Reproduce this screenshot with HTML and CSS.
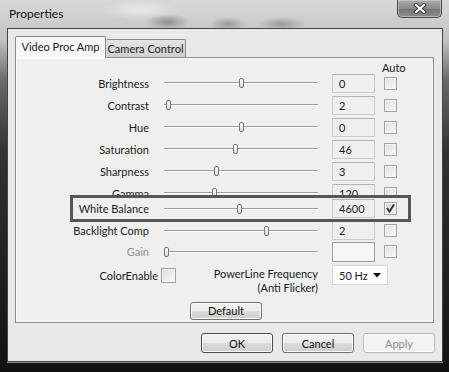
FILE: index.html
```html
<!DOCTYPE html>
<html lang="en">
<head>
<meta charset="UTF-8">
<title>Properties</title>
<link rel="stylesheet" href="styles.css">
</head>
<body>

<div class="window">
  <div class="titlebar">
    <span class="title">Properties</span>
    <div class="close">
      <svg width="14" height="11" viewBox="0 0 14 11">
        <path d="M3 2 L11 9 M11 2 L3 9" stroke="#3a3a3a" stroke-width="4" stroke-linecap="square"/>
        <path d="M3 2 L11 9 M11 2 L3 9" stroke="#fff" stroke-width="2" stroke-linecap="square"/>
      </svg>
    </div>
  </div>

  <div class="client">
    <div class="tabs">
      <div class="tab active">Video Proc Amp</div>
      <div class="tab">Camera Control</div>
    </div>

    <div class="panel">
      <div class="auto-head">Auto</div>

      <div class="row">
        <label>Brightness</label>
        <div class="slider"><span class="thumb" style="left:75px"></span></div>
        <div class="value">0</div>
        <span class="check"></span>
      </div>
      <div class="row">
        <label>Contrast</label>
        <div class="slider"><span class="thumb" style="left:2px"></span></div>
        <div class="value">2</div>
        <span class="check"></span>
      </div>
      <div class="row">
        <label>Hue</label>
        <div class="slider"><span class="thumb" style="left:75px"></span></div>
        <div class="value">0</div>
        <span class="check"></span>
      </div>
      <div class="row">
        <label>Saturation</label>
        <div class="slider"><span class="thumb" style="left:69px"></span></div>
        <div class="value">46</div>
        <span class="check"></span>
      </div>
      <div class="row">
        <label>Sharpness</label>
        <div class="slider"><span class="thumb" style="left:50px"></span></div>
        <div class="value">3</div>
        <span class="check"></span>
      </div>
      <div class="row">
        <label>Gamma</label>
        <div class="slider"><span class="thumb" style="left:48px"></span></div>
        <div class="value">120</div>
        <span class="check"></span>
      </div>
      <div class="row row-wb">
        <label>White Balance</label>
        <div class="slider"><span class="thumb" style="left:73px"></span></div>
        <div class="value">4600</div>
        <span class="check checked">
          <svg width="11" height="11" viewBox="0 0 11 11"><path d="M2 5 L4.5 8.5 L9 1.5" fill="none" stroke="#333" stroke-width="2"/></svg>
        </span>
      </div>
      <div class="row row-low">
        <label>Backlight Comp</label>
        <div class="slider"><span class="thumb" style="left:100px"></span></div>
        <div class="value">2</div>
        <span class="check"></span>
      </div>
      <div class="row row-low disabled">
        <label>Gain</label>
        <div class="slider"><span class="thumb" style="left:0px"></span></div>
        <div class="value"></div>
        <span class="check"></span>
      </div>

      <div class="extra">
        <div class="color-enable">ColorEnable <span class="check big"></span></div>
        <div class="powerline">PowerLine Frequency<br>(Anti Flicker)</div>
        <div class="select">
          <span>50 Hz</span>
          <svg width="8" height="5" viewBox="0 0 8 5"><path d="M0 0 H8 L4 4.5 Z" fill="#111"/></svg>
        </div>
      </div>

      <div class="default-row">
        <button class="btn small">Default</button>
      </div>
    </div>

    <div class="buttons">
      <button class="btn ok">OK</button>
      <button class="btn">Cancel</button>
      <button class="btn" disabled>Apply</button>
    </div>
  </div>
</div>

</body>
</html>
```

FILE: styles.css
```css
body {
  margin: 0;
  font-family: Lato, "Noto Sans", sans-serif;
  font-size: 11px;
  color: #1b1b1b;
}
.window {
  width: 449px;
  height: 372px;
  display: flex;
  flex-direction: column;
  background: linear-gradient(to bottom, #d2d2d2 0, #c2c2c2 40px, #6a6a6a 80px, #333 150px, #1c1c1c 300px, #111 372px);
}
.titlebar {
  height: 28px;
  flex: none;
  display: flex;
  justify-content: space-between;
  background:
    radial-gradient(ellipse 22px 8px at 168px 22px, rgba(70,70,70,.45), transparent),
    radial-gradient(ellipse 18px 7px at 228px 24px, rgba(80,80,80,.4), transparent),
    radial-gradient(ellipse 24px 7px at 282px 24px, rgba(80,80,80,.4), transparent),
    radial-gradient(ellipse 40px 10px at 140px 10px, rgba(255,255,255,.5), transparent),
    linear-gradient(to bottom, #d8d8d8, #c9c9c9);
}
.title {
  padding-left: 9px;
  line-height: 28px;
  font-size: 12px;
  color: #111;
}
.close {
  width: 45px;
  height: 18px;
  margin-right: 7px;
  box-sizing: border-box;
  border: 1px solid #4a4a4a;
  border-top: none;
  border-radius: 0 0 5px 5px;
  background: linear-gradient(to bottom, #a8a8a8, #8a8a8a 50%, #747474 51%, #8c8c8c);
  box-shadow: inset 0 0 0 1px rgba(255,255,255,.35);
  display: flex;
  justify-content: center;
  align-items: center;
}
.client {
  flex: 1;
  margin: 0 6px 10px 7px;
  padding: 7px 7px 0 7px;
  border: 1px solid #444;
  background: #e9e9e9;
  box-shadow: 0 1px 0 rgba(255,255,255,.5);
}

/* tabs */
.tabs {
  display: flex;
  align-items: flex-start;
  height: 22px;
  margin-bottom: -1px;
  position: relative;
  z-index: 1;
}
.tab {
  box-sizing: border-box;
  border: 1px solid #8a8a8a;
  border-bottom: none;
  border-radius: 2px 2px 0 0;
  text-align: center;
  white-space: nowrap;
}
.tab.active {
  width: 91px;
  height: 22px;
  line-height: 19px;
  background: #f7f7f7;
}
.tab:not(.active) {
  width: 80px;
  height: 18px;
  margin-top: 3px;
  border-left: none;
  line-height: 18px;
  background: linear-gradient(to bottom, #e4e4e4, #cfcfcf);
}
.panel {
  width: 419px;
  height: 266px;
  box-sizing: border-box;
  border: 1px solid #8d8d8d;
  background: #efefef;
  box-shadow: inset 0 0 0 1px #fafafa;
  position: relative;
}
.auto-head {
  height: 14px;
  line-height: 20px;
  padding-left: 366px;
}

/* control rows */
.row {
  display: flex;
  align-items: center;
  height: 22px;
}
.row label {
  width: 133px;
  text-align: right;
  white-space: nowrap;
}
.slider {
  width: 154px;
  height: 10px;
  margin-left: 15px;
  position: relative;
}
.slider::before {
  content: "";
  position: absolute;
  left: 0;
  right: 0;
  top: 4px;
  height: 1px;
  background: #9c9c9c;
  border-bottom: 1px solid #fff;
}
.thumb {
  position: absolute;
  top: 0;
  width: 5px;
  height: 10px;
  box-sizing: border-box;
  border: 1px solid #767676;
  border-radius: 2px;
  background: linear-gradient(to bottom, #fff, #dadada);
}
.value {
  width: 43px;
  height: 19px;
  margin-left: 14px;
  padding-left: 6px;
  box-sizing: border-box;
  border: 1px solid #cacaca;
  border-top-color: #b4b4b4;
  line-height: 17px;
}
.check {
  width: 13px;
  height: 13px;
  margin-left: 9px;
  box-sizing: border-box;
  border: 1px solid #a3a3a3;
  background: linear-gradient(135deg, #dedede, #f9f9f9);
  box-shadow: inset 0 0 0 1px #f4f4f4;
  display: flex;
  justify-content: center;
  align-items: center;
}
.check.checked {
  background: linear-gradient(135deg, #d4d4d4, #f2f2f2);
}
.row-wb {
  height: 21px;
  margin-top: -6px;
  position: relative;
  z-index: 0;
}
.row-wb::after {
  content: "";
  position: absolute;
  left: 54px;
  top: -3px;
  width: 341px;
  height: 27px;
  box-sizing: border-box;
  border: 3px solid #565656;
  background: #efefef;
  z-index: -1;
}
.row-low {
  height: 21px;
}
.row-wb + .row-low {
  margin-top: 1px;
}
.disabled label {
  color: #8f8f8f;
}
.disabled .value {
  height: 20px;
  border-color: #9d9d9d;
  background: #f6f6f6;
}

/* colour enable / powerline */
.extra {
  display: flex;
  align-items: flex-start;
  margin-top: 3px;
}
.color-enable {
  width: 160px;
  height: 20px;
  display: flex;
  justify-content: flex-end;
  align-items: center;
  gap: 3px;
}
.check.big {
  width: 15px;
  height: 15px;
  margin-left: 0;
}
.powerline {
  width: 142px;
  padding-top: 2px;
  line-height: 14px;
  text-align: right;
}
.select {
  width: 56px;
  height: 20px;
  margin-left: 14px;
  padding: 0 6px 0 6px;
  box-sizing: border-box;
  border: 1px solid #d4d4d4;
  background: #fff;
  display: flex;
  justify-content: space-between;
  align-items: center;
}
.default-row {
  display: flex;
  justify-content: center;
  padding-left: 3px;
  margin-top: 7px;
}

/* buttons */
.btn {
  width: 72px;
  height: 20px;
  padding: 0;
  font-family: Lato, "Noto Sans", sans-serif;
  font-size: 11px;
  color: #111;
  border: 1px solid #707070;
  border-radius: 3px;
  background: linear-gradient(to bottom, #f3f3f3 0%, #ebebeb 48%, #dcdcdc 52%, #cdcdcd 100%);
  box-shadow: inset 0 0 0 1px #fbfbfb;
}
.btn.small {
  height: 18px;
  line-height: 14px;
}
.btn.ok {
  border-color: #4d4d4d;
}
.btn:disabled {
  color: #8d8d8d;
  border-color: #b7b7b7;
  background: #f3f3f3;
}
.buttons {
  display: flex;
  justify-content: flex-end;
  gap: 9px;
  margin-top: 10px;
}
```
